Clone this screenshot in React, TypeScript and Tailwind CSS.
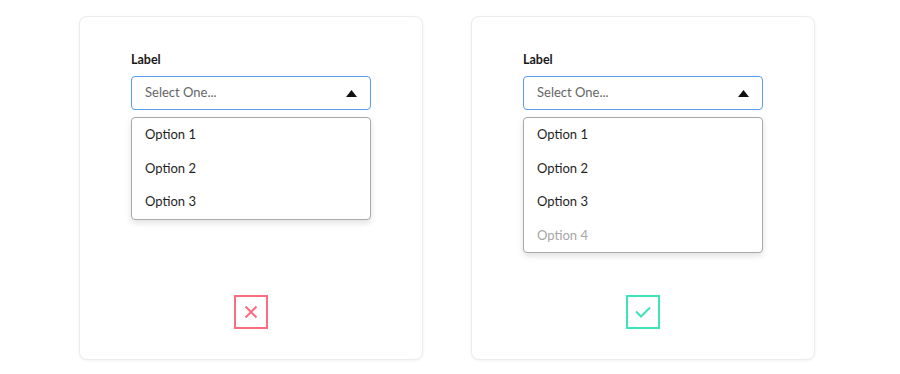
import React from "react";

function Card({ options, good }: { options: { label: string; muted?: boolean }[]; good: boolean }) {
  return (
    <div className="w-[344px] h-[344px] flex flex-col items-center bg-white border border-[#ececec] rounded-[8px] shadow-[0_1px_3px_rgba(0,0,0,0.06)] pt-[35px] pb-[30px]">
      <div className="w-[240px]">
        <div className="text-[12.5px] leading-[16px] font-bold text-[#1a1a1a] mb-[8px]">Label</div>
        <div className="h-[34px] flex items-center justify-between border border-[#5b9cec] rounded-[4px] pl-[13px] pr-[13px]">
          <span className="text-[13px] text-[#666666]">Select One...</span>
          <svg width="11" height="7" viewBox="0 0 11 7">
            <path d="M5.5 0 L11 7 L0 7 Z" fill="#111" />
          </svg>
        </div>
        <div className="mt-[7px] border border-[#a9a9a9] rounded-[4px] bg-white shadow-[0_3px_6px_rgba(0,0,0,0.12)]">
          {options.map((o) => (
            <div
              key={o.label}
              className={
                "h-[33.5px] flex items-center pl-[13px] text-[13px] " +
                (o.muted ? "text-[#a6a6a6]" : "text-[#1f1f1f]")
              }
            >
              {o.label}
            </div>
          ))}
        </div>
      </div>
      <div className="mt-auto">
        {good ? (
          <div className="w-[34px] h-[34px] border-2 border-[#3fe3b9] flex items-center justify-center">
            <svg width="20" height="20" viewBox="0 0 20 20">
              <path d="M3 9.5 L8 14.5 L17 5.5" stroke="#3fe3b9" strokeWidth="2" fill="none" />
            </svg>
          </div>
        ) : (
          <div className="w-[34px] h-[34px] border-2 border-[#ff6b81] flex items-center justify-center">
            <svg width="14" height="14" viewBox="0 0 14 14">
              <path d="M1.5 1.5 L12.5 12.5 M12.5 1.5 L1.5 12.5" stroke="#ff6b81" strokeWidth="2" fill="none" />
            </svg>
          </div>
        )}
      </div>
    </div>
  );
}

export default function App() {
  return (
    <div
      className="w-[900px] h-[374px] bg-white flex gap-[48px] pt-[16px] pl-[79px]"
      style={{ fontFamily: "Lato, 'Noto Sans', sans-serif" }}
    >
      <Card
        good={false}
        options={[{ label: "Option 1" }, { label: "Option 2" }, { label: "Option 3" }]}
      />
      <Card
        good
        options={[
          { label: "Option 1" },
          { label: "Option 2" },
          { label: "Option 3" },
          { label: "Option 4", muted: true },
        ]}
      />
    </div>
  );
}
